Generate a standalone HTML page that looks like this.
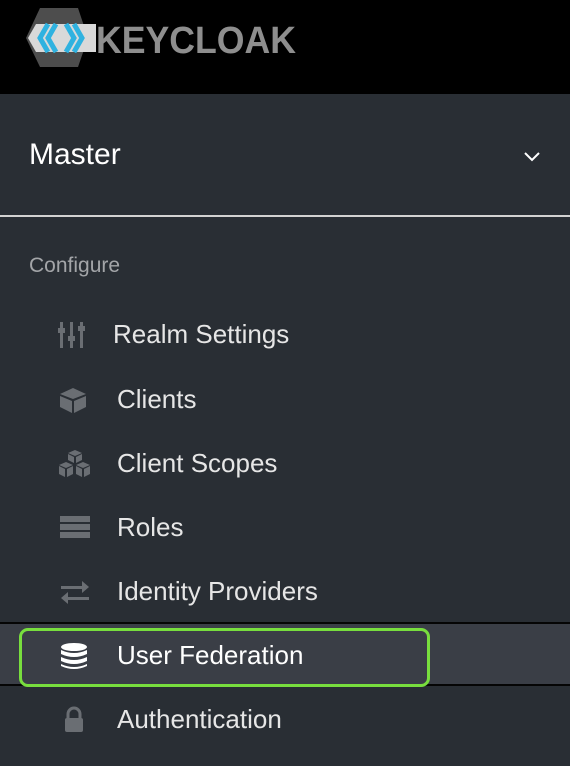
<!DOCTYPE html>
<html><head><style>
*{margin:0;padding:0;box-sizing:border-box}
body{width:570px;height:766px;background:#292e34;font-family:"Liberation Sans",sans-serif;position:relative;overflow:hidden}
.hdr{position:absolute;left:0;top:0;width:570px;height:94px;background:#000}
.logo{position:absolute;left:26px;top:8px}
.master{position:absolute;left:29px;top:138px;font-size:30px;color:#fff}
.chev{position:absolute;left:523px;top:150px}
.div{position:absolute;left:0;top:215px;width:570px;height:2px;background:#d2d2d2}
.conf{position:absolute;left:29px;top:254px;font-size:21px;color:#a3a5a8}
.item{position:absolute;left:0;width:570px;height:40px;font-size:26px;color:#e6e6e6;line-height:40px}
.item span{position:absolute;left:117px}
.item svg{position:absolute;left:58px;top:6px}
.active{position:absolute;left:0;top:622px;width:570px;height:64px;background:#3a3e46;border-top:2px solid #050505;border-bottom:2px solid #050505}
.box{position:absolute;left:19px;top:628px;width:411px;height:59px;border:3.5px solid #78de3e;border-radius:9px}
</style></head><body>
<div class="hdr">
<svg class="logo" width="300" height="62" viewBox="0 0 300 62">
<polygon points="14,0 52,0 62,30 52,59 14,59 0,30" fill="#4d4d4d"/>
<polygon points="2,30 10,16 70,16 70,44 10,44" fill="#d9d9d9"/>
<path d="M22,16 L14,30 L22,44 M30,16 L22,30 L30,44" stroke="#2fb2e0" stroke-width="5" fill="none"/>
<path d="M40,16 L48,30 L40,44 M48,16 L56,30 L48,44" stroke="#2fb2e0" stroke-width="5" fill="none"/>
<text x="70" y="45" font-family="Liberation Sans" font-weight="bold" font-size="38" fill="#8e8e8e" textLength="200" lengthAdjust="spacingAndGlyphs">KEYCLOAK</text>
</svg>
</div>
<div class="master">Master</div>
<svg class="chev" width="18" height="14" viewBox="0 0 18 14"><path d="M2,3 L9,10 L16,3" stroke="#fff" stroke-width="2" fill="none"/></svg>
<div class="div"></div>
<div class="conf">Configure</div>

<div class="item" style="top:314px"><svg width="30" height="30" viewBox="0 0 30 30" fill="#6a6e73"><rect x="2" y="2" width="3" height="26"/><rect x="12" y="2" width="3" height="26"/><rect x="22" y="2" width="3" height="26"/><rect x="0" y="8" width="7" height="5"/><rect x="10" y="16" width="7" height="5"/><rect x="20" y="6" width="7" height="5"/></svg><span style="left:113px">Realm Settings</span></div>
<div class="item" style="top:379px"><svg width="30" height="30" viewBox="0 0 30 30" fill="#6a6e73"><polygon points="15,3 28,9 15,14 2,9"/><polygon points="2,11 14,16 14,28 2,22"/><polygon points="16,16 28,11 28,22 16,28"/></svg><span>Clients</span></div>
<div class="item" style="top:443px"><svg width="34" height="30" viewBox="0 0 34 30" fill="#6a6e73"><polygon points="17,1 24,4 17,7 10,4"/><polygon points="10,5 16,8 16,14 10,11"/><polygon points="18,8 24,5 24,11 18,14"/><polygon points="8,13 15,16 8,19 1,16"/><polygon points="1,17 7,20 7,28 1,25"/><polygon points="9,20 15,17 15,25 9,28"/><polygon points="25,13 32,16 25,19 18,16"/><polygon points="18,17 24,20 24,28 18,25"/><polygon points="26,20 32,17 32,25 26,28"/></svg><span>Client Scopes</span></div>
<div class="item" style="top:507px"><svg width="32" height="30" viewBox="0 0 32 30" fill="#6a6e73"><rect x="2" y="3" width="30" height="6"/><rect x="2" y="11" width="30" height="6"/><rect x="2" y="19" width="30" height="6"/></svg><span>Roles</span></div>
<div class="item" style="top:571px"><svg width="32" height="30" viewBox="0 0 32 30" fill="#6a6e73"><path d="M3,11 H24 V6 L31,12 L24,18 V14 H3Z" transform="translate(0,-2)"/><path d="M31,21 H10 V16 L3,22 L10,28 V24 H31Z" transform="translate(0,-1)"/></svg><span>Identity Providers</span></div>
<div class="active"></div>
<div class="box"></div>
<div class="item" style="top:635px;color:#fff"><svg width="32" height="30" viewBox="0 0 32 30" fill="#fff"><ellipse cx="16" cy="6" rx="13" ry="4"/><path d="M3,9 Q16,15 29,9 V13 Q16,19 3,13Z"/><path d="M3,16 Q16,22 29,16 V20 Q16,26 3,20Z"/><path d="M3,23 Q16,29 29,23 V25 Q16,31 3,25Z"/></svg><span>User Federation</span></div>
<div class="item" style="top:699px"><svg width="32" height="30" viewBox="0 0 32 30" fill="#6a6e73"><path d="M10,13 V9 A6,6 0 0 1 22,9 V13" stroke="#6a6e73" stroke-width="3" fill="none"/><rect x="7" y="13" width="18" height="14" rx="2"/></svg><span>Authentication</span></div>
</body></html>
